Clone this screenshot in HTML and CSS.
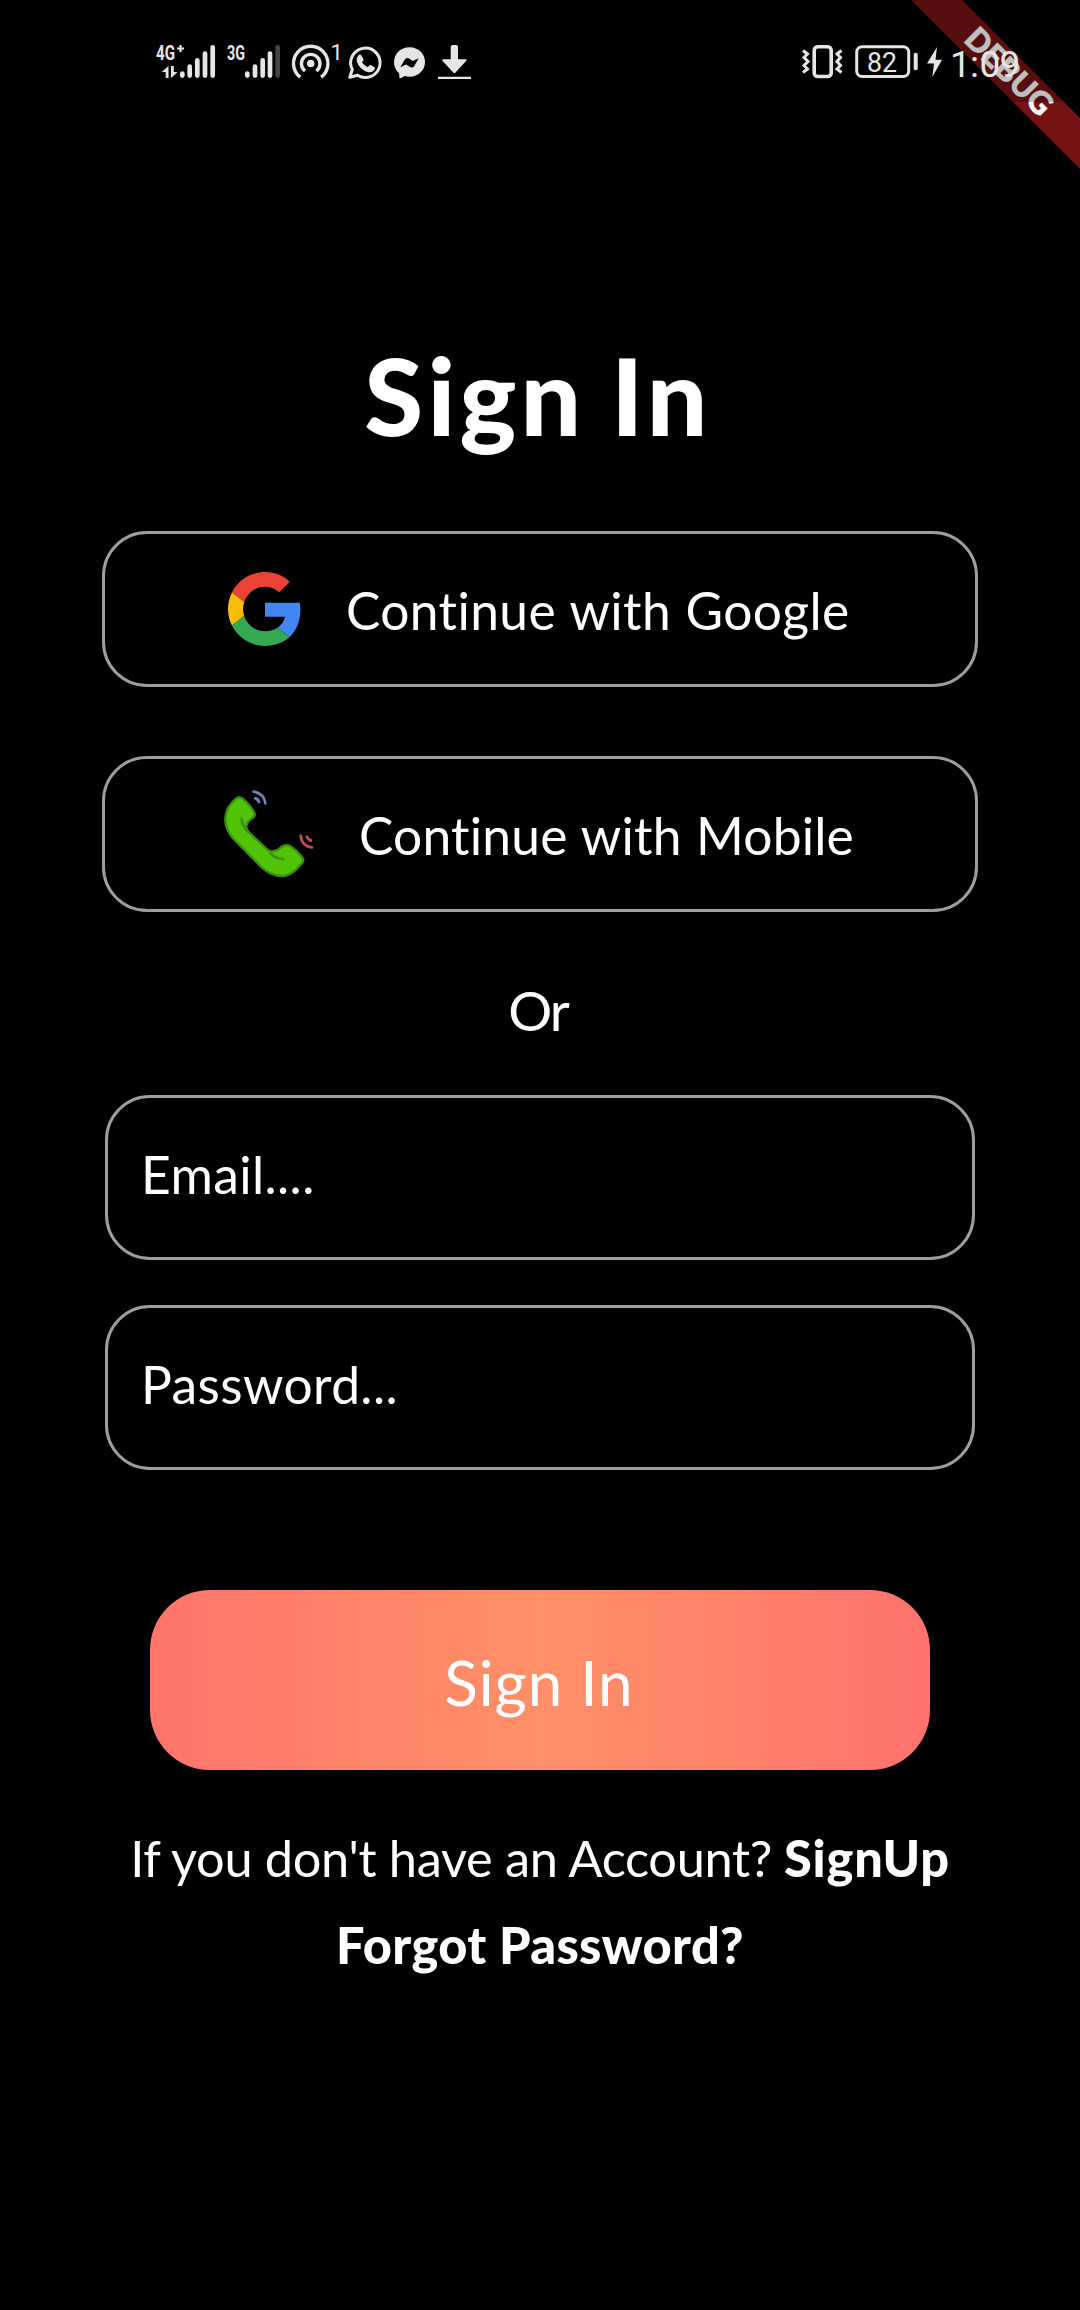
FILE: index.html
```html
<!DOCTYPE html>
<html lang="en">
<head>
<meta charset="utf-8">
<title>Sign In</title>
<link rel="stylesheet" href="styles.css">
</head>
<body>
<div class="screen">
  <svg class="debug-banner" width="180" height="180" viewBox="0 0 180 180">
    <path d="M11 0H62L180 118V169Z" fill="#731313"/>
    <text x="0" y="11" transform="translate(109 71.500) rotate(45)" text-anchor="middle" fill="#fff" stroke="#fff" stroke-width="0.600" font-size="31.500" font-weight="900">DEBUG</text>
  </svg>

  <header class="status-bar">
    <svg class="status-left" width="330" height="60" viewBox="150 30 330 60" fill="#e5e5e5">
      <g font-weight="700" font-size="19.6">
        <text x="156" y="59.7" textLength="19" lengthAdjust="spacingAndGlyphs">4G</text>
        <text x="227" y="59.7" textLength="18" lengthAdjust="spacingAndGlyphs">3G</text>
      </g>
      <path d="M180.5 45v7M177 48.5h7" stroke="#e5e5e5" stroke-width="2.2"/>
      <path d="M161.8 72L168.5 66V78H165.7V72ZM171 66h2.8V72H177.700L171 78Z"/>
      <g stroke="#e5e5e5" stroke-width="4.7" stroke-linecap="round">
        <path d="M182.300 73.500V75.600M189.700 66.700V75.600M197.300 60.300V75.600M205 53.500V75.600M212.700 47.300V75.600"/>
        <path d="M247.300 73.500V75.600M255 66.700V75.600M262.700 60.300V75.600M270 53.500V75.600"/>
        <path d="M277.700 47.300V75.600" stroke="#444"/>
      </g>
      <circle cx="310.700" cy="63.500" r="3.800"/>
      <g fill="none" stroke="#e5e5e5" stroke-width="3.400">
        <path d="M305 71A9.300 9.300 0 1 1 316.400 71"/>
        <path d="M300.300 77.200A17.200 17.200 0 1 1 321.100 77.200"/>
      </g>
      <text x="330.500" y="60" font-size="22">1</text>
      <path d="M349.800 77.300L352.300 69.500A14.700 14.700 0 1 1 357.500 75.200Z" fill="none" stroke="#e5e5e5" stroke-width="3" stroke-linejoin="round"/>
      <path d="M358.500 55.200q1.500-1.200 2.800 0l2.200 4q.300 1-1.500 3 2.200 3.600 5.800 5 1.800-2.400 2.800-2.100l4 2.200q.8 1-.3 2.800-2.300 2.900-6 2.100-9-2.600-11.500-10.800-.4-4.200 1.700-6.200Z"/>
      <path fill-rule="evenodd" d="M409.500 47.300C418.500 47.300 425 54 425 62S418.500 76.700 409.500 76.700q-2.500 0-4.500-.6L400.500 78.300Q399.300 78.500 399.300 77L399.200 73.500Q394 69 394 62C394 54 400.500 47.300 409.500 47.300ZM400.300 67.200L406.200 64.400 410.500 67.200Q412.500 68.200 414 66.400L418.700 58.200 412.800 61 408.700 58.200Q406.300 57.200 404.800 59.400Z"/>
      <path d="M450.700 47Q450.700 45 452.700 45H456Q458 45 458 47V59.200H465.800Q467.200 59.500 466.300 60.700L455.500 72.500Q454.300 73.600 453.200 72.500L442.400 60.700Q441.500 59.500 443 59.200H450.700ZM438 76.700H471V79H438Z"/>
    </svg>
    <svg class="status-right" width="250" height="60" viewBox="795 30 250 60" fill="#e5e5e5">
      <g fill="none" stroke="#e5e5e5" stroke-width="3">
        <rect x="814.200" y="46.700" width="17" height="29.800" rx="3.500" stroke-width="3.600"/>
        <path d="M803 50.500L807.500 54 804 57.500 808 61.500 804 65.500 807.500 69 803 72.500M841.500 50.500L837 54 840.500 57.500 837 61.500 840.500 65.500 837 69 841.500 72.500"/>
        <rect x="856.700" y="46.700" width="52" height="29.800" rx="5.500"/>
      </g>
      <rect x="913.700" y="52.700" width="4" height="17.500" rx="2"/>
      <text x="867" y="72" font-size="27" textLength="30" lengthAdjust="spacingAndGlyphs">82</text>
      <path d="M937 47L927 63.500H934L932.300 77 942 59.700H935.500Z"/>
      <text class="clock" y="77" font-size="37"><tspan x="950">1</tspan><tspan x="970">:</tspan><tspan x="979.500">0</tspan><tspan x="999.500">9</tspan></text>
    </svg>
  </header>

  <main class="sign-in">
    <h1 class="title">Sign In</h1>

    <button class="provider provider-google" type="button">
      <svg width="74" height="74" viewBox="0 0 48 48">
        <path fill="#EA4335" d="M24 9.500c3.540 0 6.710 1.220 9.210 3.600l6.850-6.850C35.900 2.380 30.470 0 24 0 14.620 0 6.510 5.380 2.560 13.220l7.980 6.190C12.430 13.720 17.740 9.500 24 9.500z"/>
        <path fill="#4285F4" d="M46.980 24.550c0-1.570-.15-3.090-.38-4.550H24v9.020h12.940c-.58 2.960-2.260 5.480-4.780 7.180l7.730 6c4.510-4.180 7.090-10.360 7.090-17.650z"/>
        <path fill="#FBBC05" d="M10.530 28.590c-.48-1.450-.76-2.990-.76-4.590s.27-3.140.76-4.590l-7.980-6.190C.92 16.460 0 20.120 0 24c0 3.880.92 7.540 2.560 10.780l7.970-6.190z"/>
        <path fill="#34A853" d="M24 48c6.480 0 11.930-2.130 15.890-5.810l-7.730-6c-2.150 1.450-4.920 2.300-8.160 2.300-6.260 0-11.570-4.220-13.470-9.910l-7.980 6.190C6.510 42.620 14.620 48 24 48z"/>
      </svg>
      <span>Continue with Google</span>
    </button>

    <button class="provider provider-mobile" type="button">
      <svg width="92" height="90" viewBox="69 28 276 270" fill="none" stroke-linecap="round" stroke-linejoin="round">
        <path fill="#52c408" stroke="#3a8f0b" stroke-width="7" d="M108 57Q118 50 128 57Q150 75 162 98Q168 108 158 114Q142 124 139 138Q137 148 147 158L200 208Q208 217 218 215Q232 214 244 202Q256 193 268 198Q290 210 307 234Q313 242 306 250Q278 287 250 289Q215 290 185 263L98 175Q74 145 76 115Q78 82 108 57Z"/>
        <path stroke="#3a8f0b" stroke-width="8" d="M125 117Q126 140 144 156M212 222Q228 238 250 238"/>
        <path stroke="#6f85bd" stroke-width="8" d="M161 36Q192 42 196 71M166 56Q175 58 177 67"/>
        <path stroke="#c9475f" stroke-width="8" d="M302 168Q305 200 336 203M321 171Q324 181 333 183"/>
      </svg>
      <span>Continue with Mobile</span>
    </button>

    <p class="divider">Or</p>

    <input class="field" type="email" placeholder="Email....">
    <input class="field" type="password" placeholder="Password...">

    <button class="submit" type="button">Sign In</button>

    <p class="sign-up"><span>If you don't have an Account?</span><a class="link">SignUp</a></p>
    <p class="forgot"><a class="link">Forgot Password?</a></p>
  </main>
</div>
</body>
</html>
```
FILE: styles.css
```css
* {
  box-sizing: border-box;
}

body {
  margin: 0;
  background: #000;
  color: #fff;
  font-family: Lato, "Noto Sans", sans-serif;
}

.screen {
  position: relative;
  display: flex;
  flex-direction: column;
  width: 1080px;
  height: 2310px;
  overflow: hidden;
  background: #000;
}

.debug-banner {
  position: absolute;
  top: 0;
  right: 0;
}

.status-bar {
  position: relative;
  z-index: 1;
  display: flex;
  justify-content: space-between;
  align-items: flex-start;
  height: 102px;
  padding: 30px 35px 0 150px;
  background: rgba(0, 0, 0, 0.25);
  font-family: Roboto, sans-serif;
}

.sign-in {
  display: flex;
  flex-direction: column;
  padding: 229px 102px 0;
}

.title {
  margin: 0 0 72px;
  padding-right: 4px;
  font-size: 107px;
  font-weight: 900;
  line-height: 128px;
  letter-spacing: 4.2px;
  word-spacing: -4px;
  text-align: center;
}

.provider {
  display: flex;
  align-items: center;
  height: 156px;
  border: 3px solid #9e9e9e;
  border-radius: 45px;
  background: none;
  color: #fff;
  font: 400 51.5px/60px Lato, "Noto Sans", sans-serif;
  letter-spacing: 0.38px;
  word-spacing: 1px;
}

.provider-google {
  gap: 44px;
  margin-bottom: 69px;
  padding: 0 0 0 123px;
}

.provider-mobile {
  gap: 44px;
  padding: 0 0 0 118px;
  letter-spacing: 0.2px;
}

.provider span {
  padding-top: 1px;
}

.divider {
  margin: 68px 0 55px;
  padding-right: 4px;
  font-size: 55px;
  line-height: 60px;
  letter-spacing: -2px;
  text-align: center;
}

.field {
  height: 165px;
  margin: 0 3px 45px;
  padding: 0 33px 8px;
  border: 3px solid #9e9e9e;
  border-radius: 45px;
  background: none;
  color: #fff;
  font: 400 51.5px/60px Lato, "Noto Sans", sans-serif;
  letter-spacing: 0.4px;
}

.field::placeholder {
  color: #fff;
  opacity: 1;
}

.submit {
  height: 180px;
  margin: 75px 48px 58px;
  padding: 3px 2px 0 0;
  border: 0;
  border-radius: 60px;
  background: linear-gradient(90deg, #ff746c, #ff9068 50%, #ff726d);
  color: #fff;
  font: 400 62px/74px Lato, "Noto Sans", sans-serif;
  letter-spacing: 1px;
  word-spacing: 0;
}

.sign-up {
  display: flex;
  justify-content: center;
  gap: 12px;
  margin: 0 -20px 27px;
  font-size: 50.5px;
  line-height: 60px;
  letter-spacing: -0.32px;
  white-space: nowrap;
}

.link {
  font-weight: 900;
  letter-spacing: 0.8px;
}

.forgot {
  margin: 0;
  font-size: 50.5px;
  line-height: 60px;
  text-align: center;
}

.forgot .link {
  letter-spacing: 0.35px;
}
```
